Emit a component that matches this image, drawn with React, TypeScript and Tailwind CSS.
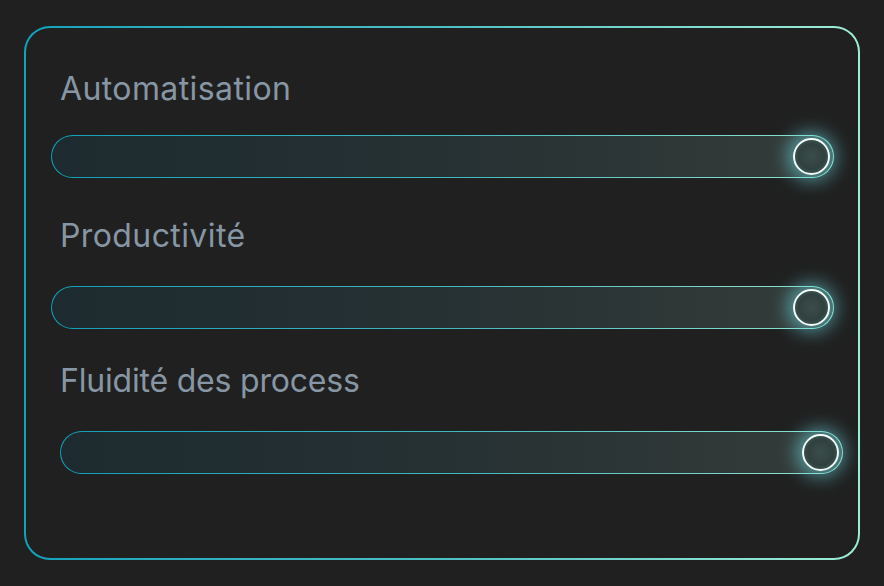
import React from 'react';

interface Item {
  label: string;
  labelClass: string;
  trackClass: string;
}

const items: Item[] = [
  { label: 'Automatisation', labelClass: 'pt-[45px] pl-[34px] tracking-[0.4px]', trackClass: 'mt-[30px] ml-[25px]' },
  { label: 'Productivité', labelClass: 'pt-[42px] pl-[34px] tracking-[0.4px]', trackClass: 'mt-[34px] ml-[25px]' },
  { label: 'Fluidité des process', labelClass: 'pt-[36px] pl-[34px] tracking-[-0.2px]', trackClass: 'mt-[34px] ml-[34px]' },
];

function Slider({ className }: { className: string }) {
  return (
    <div className={`w-[783px] h-[43px] rounded-full p-px bg-gradient-to-r from-[#0f9fb8] via-[#3fb8c0] to-[#8fe6cf] ${className}`}>
      <div className="h-full w-full rounded-full bg-gradient-to-r from-[#1d2b30] via-[#263133] to-[#343c39] flex items-center justify-end pr-[3px]">
        <div className="w-[37px] h-[37px] rounded-full border-2 border-[#f0fdf9] bg-[radial-gradient(circle,#3b4d4a_0%,#30403e_55%,#4a7072_100%)] shadow-[0_0_18px_6px_rgba(110,215,225,0.6)]" />
      </div>
    </div>
  );
}

export default function App() {
  return (
    <div className="w-[884px] h-[586px] bg-[#202020] pl-[24px] pt-[26px]" style={{ fontFamily: 'Inter, "Noto Sans", sans-serif' }}>
      <div className="w-[836px] h-[534px] rounded-[26px] p-[2px] bg-gradient-to-r from-[#0fa3bd] via-[#4cc0c4] to-[#9eeed6]">
        <div className="h-full w-full rounded-[24px] bg-[#202020]">
          {items.map((it) => (
            <div key={it.label}>
              <div className={`${it.labelClass} text-[32px] leading-[32px] text-[#8796a4]`}>{it.label}</div>
              <Slider className={it.trackClass} />
            </div>
          ))}
        </div>
      </div>
    </div>
  );
}
